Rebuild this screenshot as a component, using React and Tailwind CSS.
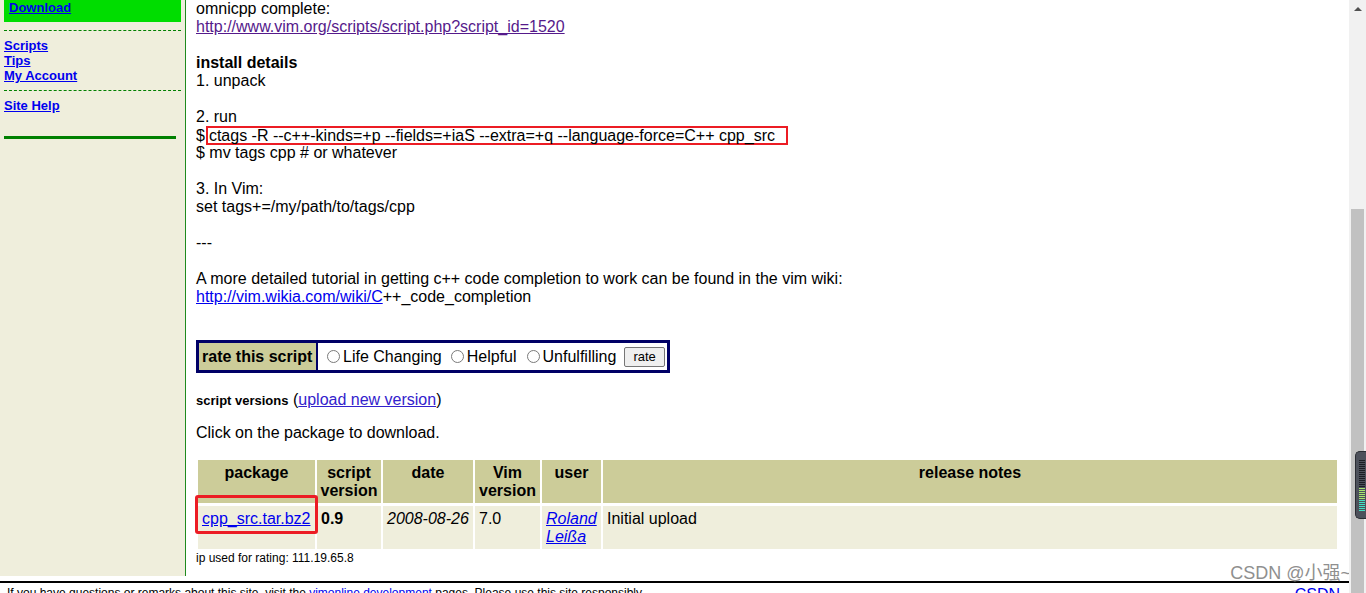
import React from "react";

function Radio({ className = "" }) {
  return (
    <span
      className={`inline-block h-[13px] w-[13px] shrink-0 rounded-full border border-[#7a7a7a] bg-white ${className}`}
    />
  );
}

function Widget() {
  const stripes = [];
  for (let i = 0; i < 26; i++) {
    const color = i < 14 ? "#1c1e24" : i < 20 ? "#a6e86e" : "#44e0c4";
    stripes.push(<rect key={i} x="3" y={8 + i * 2} width="6" height="1" fill={color} />);
  }
  return (
    <div className="absolute right-0 top-[451px] h-[68px] w-[11px] overflow-hidden rounded-l-[5px] border border-r-0 border-[#2a2d33] bg-[#4d515b]">
      <svg width="11" height="68" viewBox="0 0 11 68">
        {stripes}
      </svg>
    </div>
  );
}

export default function App() {
  const line = "h-[18px] leading-[18px] whitespace-pre";
  const head = "bg-[#cccc99] pt-[4px] text-center font-bold leading-[18px] h-[43px]";
  const cell = "bg-[#efeedc] pt-[4px] pl-[4px] leading-[18px] h-[43px]";
  return (
    <div className="flex h-[593px] w-[1366px] overflow-hidden bg-white font-['Liberation_Sans',Arial,sans-serif] text-black">
      <div className="relative flex w-[1349px] shrink-0 flex-col">
        <div className="flex">
          {/* Sidebar */}
          <aside className="h-[576px] w-[186px] shrink-0 border-r border-[#1e8a1e] bg-[#efeedc] px-[4px] text-[13px] leading-[15px]">
            <div className="h-[22px] bg-[#00dd00] pl-[5px]">
              <a href="#" className="font-bold text-[#0000ee] underline">
                Download
              </a>
            </div>
            <div className="mt-[8px] border-t border-dashed border-[#008000]" />
            <div className="mt-[7px] flex flex-col font-bold">
              <a href="#" className="self-start text-[#0000ee] underline">Scripts</a>
              <a href="#" className="self-start text-[#0000ee] underline">Tips</a>
              <a href="#" className="self-start text-[#0000ee] underline">My Account</a>
            </div>
            <div className="mt-[7px] border-t border-dashed border-[#008000]" />
            <div className="mt-[7px] font-bold">
              <a href="#" className="text-[#0000ee] underline">Site Help</a>
            </div>
            <div className="mt-[23px] h-[3px] w-[172px] bg-[#008000]" />
          </aside>

          {/* Main */}
          <main className="min-w-0 flex-1 px-[10px] pb-[11px] text-[16px]">
            <div className={line}>omnicpp complete:</div>
            <div className={line}>
              <a href="#" className="text-[#551a8b] underline">http://www.vim.org/scripts/script.php?script_id=1520</a>
            </div>
            <div className={line} />
            <div className={`${line} font-bold`}>install details</div>
            <div className={line}>1. unpack</div>
            <div className={line} />
            <div className={line}>2. run</div>
            <div className={line}>
              $<span className="ml-[1px] inline-block border-2 border-[#ec1c24] pl-[1px] pr-[11px] leading-[15px]">ctags -R --c++-kinds=+p --fields=+iaS --extra=+q --language-force=C++ cpp_src</span>
            </div>
            <div className={line}>$ mv tags cpp # or whatever</div>
            <div className={line} />
            <div className={line}>3. In Vim:</div>
            <div className={line}>set tags+=/my/path/to/tags/cpp</div>
            <div className={line} />
            <div className={line}>---</div>
            <div className={line} />
            <div className={line}>A more detailed tutorial in getting c++ code completion to work can be found in the vim wiki:</div>
            <div className={line}>
              <a href="#" className="text-[#0000ee] underline">http://vim.wikia.com/wiki/C</a>++_code_completion
            </div>

            {/* rate box */}
            <div className="mt-[34px] flex h-[33px] w-[474px] border-[3px] border-[#000066]">
              <div className="flex w-[119px] shrink-0 items-center border-r-2 border-[#000066] bg-[#cccc99] pl-[3px] font-bold">
                rate this script
              </div>
              <div className="flex flex-1 items-center pl-[9px]">
                <Radio />
                <span className="ml-[3px]">Life Changing</span>
                <Radio className="ml-[9px]" />
                <span className="ml-[3px]">Helpful</span>
                <Radio className="ml-[10px]" />
                <span className="ml-[3px]">Unfulfilling</span>
                <button className="ml-[8px] h-[20px] rounded-[2px] border border-[#767676] bg-[#efefef] px-[8px] text-[13px] leading-[16px] text-black">
                  rate
                </button>
              </div>
            </div>

            <div className={`mt-[18px] ${line}`}>
              <span className="text-[13px] font-bold">script versions</span> (<a href="#" className="text-[#3322cc] underline">upload new version</a>)
            </div>
            <div className={`mt-[15px] ${line}`}>Click on the package to download.</div>

            {/* versions table */}
            <div className="mx-[2px] mt-[18px] grid grid-cols-[117px_64px_90px_65px_59px_1fr] gap-x-[2px] gap-y-[3px]">
              <div className={head}>package</div>
              <div className={head}>script<br />version</div>
              <div className={head}>date</div>
              <div className={head}>Vim<br />version</div>
              <div className={head}>user</div>
              <div className={head}>release notes</div>

              <div className={`${cell} relative`}>
                <a href="#" className="text-[#0000ee] underline">cpp_src.tar.bz2</a>
                <div className="absolute left-[-3px] top-[-11px] h-[39px] w-[123px] rounded-[3px] border-[3px] border-[#ec1c24]" />
              </div>
              <div className={`${cell} font-bold`}>0.9</div>
              <div className={`${cell} italic`}>2008-08-26</div>
              <div className={cell}>7.0</div>
              <div className={`${cell} italic`}>
                <a href="#" className="text-[#0000ee] underline">Roland<br />Leißa</a>
              </div>
              <div className={cell}>Initial upload</div>
            </div>

            <div className="mt-[2px] text-[12px] leading-[14px]">ip used for rating: 111.19.65.8</div>
          </main>
        </div>

        {/* footer */}
        <footer className="mt-[5px] flex items-start justify-between border-t-2 border-black pl-[7px] pr-[9px] pt-[3px] text-[12px] leading-[14px]">
          <span>
            If you have questions or remarks about this site, visit the{" "}
            <a href="#" className="text-[#0000ee] underline">vimonline development</a> pages. Please use this site responsibly.
          </span>
          <a href="#" className="text-[16px] leading-[18px] text-[#0000ee] underline">CSDN</a>
        </footer>

        {/* watermark */}
        <div className="absolute right-[-2px] top-[562px] font-['Liberation_Sans','Noto_Sans_CJK_SC',sans-serif] text-[18px] leading-[22px] text-[#8f8f8f] [text-shadow:0_0_1px_#fff]">
          CSDN @小强~
        </div>
      </div>

      {/* scrollbar */}
      <div className="relative flex w-[17px] shrink-0 flex-col bg-[#f1f1f1]">
        <div className="flex h-[209px] shrink-0 justify-center pt-[6px]">
          <svg width="8" height="5" viewBox="0 0 8 5">
            <path d="M0 5 L4 1 L8 5 Z" fill="#505050" />
          </svg>
        </div>
        <div className="mx-[2px] flex-1 bg-[#c1c1c1]" />
        <Widget />
      </div>
    </div>
  );
}
